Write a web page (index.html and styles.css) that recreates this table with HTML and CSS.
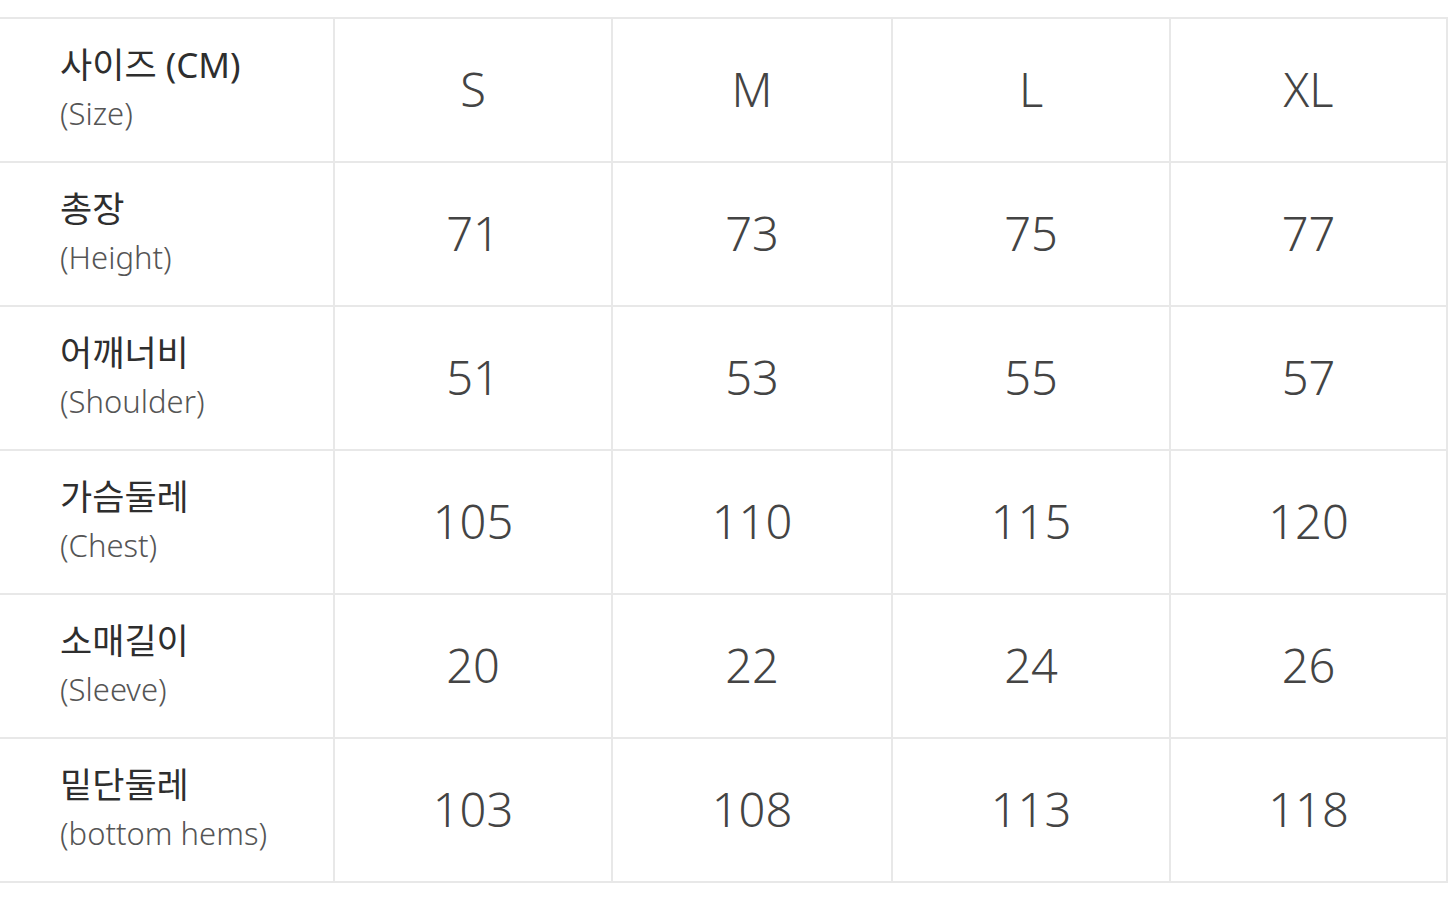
FILE: index.html
```html
<!DOCTYPE html>
<html lang="ko">
<head>
<meta charset="utf-8">
<title>Size chart</title>
<link rel="stylesheet" href="styles.css">
</head>
<body>
<div class="page">
  <div class="chart">
    <div class="cell label"><span class="ko">사이즈 (CM)</span><span class="en">(Size)</span></div>
    <div class="cell num">S</div>
    <div class="cell num">M</div>
    <div class="cell num">L</div>
    <div class="cell num">XL</div>

    <div class="cell label"><span class="ko">총장</span><span class="en">(Height)</span></div>
    <div class="cell num">71</div>
    <div class="cell num">73</div>
    <div class="cell num">75</div>
    <div class="cell num">77</div>

    <div class="cell label"><span class="ko">어깨너비</span><span class="en">(Shoulder)</span></div>
    <div class="cell num">51</div>
    <div class="cell num">53</div>
    <div class="cell num">55</div>
    <div class="cell num">57</div>

    <div class="cell label"><span class="ko">가슴둘레</span><span class="en">(Chest)</span></div>
    <div class="cell num">105</div>
    <div class="cell num">110</div>
    <div class="cell num">115</div>
    <div class="cell num">120</div>

    <div class="cell label"><span class="ko">소매길이</span><span class="en">(Sleeve)</span></div>
    <div class="cell num">20</div>
    <div class="cell num">22</div>
    <div class="cell num">24</div>
    <div class="cell num">26</div>

    <div class="cell label"><span class="ko">밑단둘레</span><span class="en">(bottom hems)</span></div>
    <div class="cell num">103</div>
    <div class="cell num">108</div>
    <div class="cell num">113</div>
    <div class="cell num">118</div>
  </div>
</div>
</body>
</html>
```

FILE: styles.css
```css
html, body {
  margin: 0;
  padding: 0;
  background: #ffffff;
}
body {
  font-family: "Noto Sans", "Noto Sans CJK KR", sans-serif;
  color: #333;
}
.page {
  padding-top: 17px;
  width: 1448px;
  height: 904px;
  box-sizing: border-box;
}
.chart {
  display: grid;
  grid-template-columns: 335px 278px 280px 278px 277px;
  grid-auto-rows: 144px;
  border-top: 2px solid #e8e8e8;
}
.cell {
  border-right: 2px solid #e8e8e8;
  border-bottom: 2px solid #e8e8e8;
  box-sizing: border-box;
  display: flex;
  align-items: center;
}
.label {
  flex-direction: column;
  align-items: flex-start;
  justify-content: center;
  padding-left: 60px;
  padding-bottom: 4px;
}
.ko {
  font-size: 35px;
  line-height: 46px;
  color: #2e2e2e;
  font-weight: 400;
}
.en {
  font-size: 31px;
  line-height: 42px;
  margin-top: 4px;
  color: #555;
  font-weight: 300;
}
.num {
  justify-content: center;
  font-size: 47px;
  font-weight: 300;
  color: #444;
  padding-bottom: 2px;
}
```
